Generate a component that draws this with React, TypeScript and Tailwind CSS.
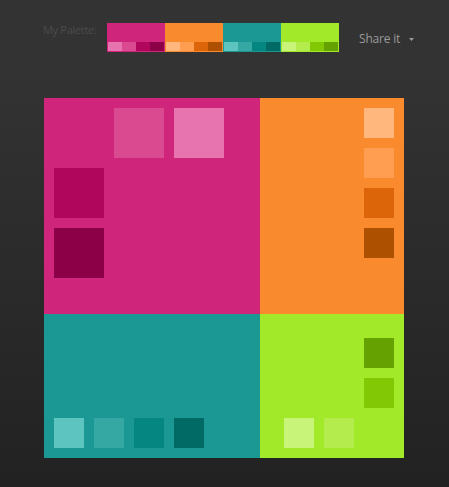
const palette = [
  { main: '#CF267C', shades: ['#E774AE', '#DA4A91', '#B0075C', '#8B0047'] },
  { main: '#F98A2D', shades: ['#FFB77E', '#FF9D50', '#DB6508', '#AD5000'] },
  { main: '#1B9894', shades: ['#5EC4BF', '#35A8A3', '#068680', '#026A64'] },
  { main: '#A2E92A', shades: ['#C8F47A', '#B4EC4E', '#82C805', '#65A100'] },
]

function Swatch({ color, size }: { color: string; size: string }) {
  return <div className={size} style={{ backgroundColor: color }} />
}

function PaletteStrip() {
  return (
    <div className="flex">
      {palette.map((p) => (
        <div key={p.main} className="w-[58px] h-[29px] flex flex-col" style={{ backgroundColor: p.main }}>
          <div className="h-[19px]" />
          <div className="flex px-px">
            {p.shades.map((s) => (
              <div key={s} className="w-[14px] h-[9px]" style={{ backgroundColor: s }} />
            ))}
          </div>
        </div>
      ))}
    </div>
  )
}

export default function App() {
  const [pink, orange, teal, lime] = palette
  return (
    <div className="w-[449px] h-[487px] bg-gradient-to-b from-[#333333] from-15% to-[#222222] font-['Open_Sans','Liberation_Sans',sans-serif]">
      {/* header */}
      <div className="flex pt-[23px] pl-[43px]">
        <span className="text-[11px] leading-none tracking-[-0.3px] whitespace-nowrap text-[#4b4b4b] mt-[1px] w-[64px]">My Palette:</span>
        <PaletteStrip />
        <div className="flex items-center ml-[20px] mt-[9px] h-[14px]">
          <span className="text-[12px] leading-none tracking-[-0.2px] text-[#9a9a9a]">Share it</span>
          <svg className="ml-[9px] mt-[1px]" width="5" height="3" viewBox="0 0 5 3">
            <path d="M0 0h5L2.5 3z" fill="#9a9a9a" />
          </svg>
        </div>
      </div>

      {/* big swatch grid */}
      <div className="ml-[44px] mt-[46px] w-[360px] grid grid-cols-[216px_144px] grid-rows-[216px_144px]">
        {/* pink */}
        <div className="p-[10px] flex flex-col gap-[10px]" style={{ backgroundColor: pink.main }}>
          <div className="flex gap-[10px] pl-[60px]">
            <Swatch color={pink.shades[1]} size="w-[50px] h-[50px]" />
            <Swatch color={pink.shades[0]} size="w-[50px] h-[50px]" />
          </div>
          <Swatch color={pink.shades[2]} size="w-[50px] h-[50px]" />
          <Swatch color={pink.shades[3]} size="w-[50px] h-[50px]" />
        </div>
        {/* orange */}
        <div className="p-[10px] flex flex-col items-end gap-[10px]" style={{ backgroundColor: orange.main }}>
          {orange.shades.map((s) => (
            <Swatch key={s} color={s} size="w-[30px] h-[30px]" />
          ))}
        </div>
        {/* teal */}
        <div className="p-[10px] flex items-end gap-[10px]" style={{ backgroundColor: teal.main }}>
          {teal.shades.map((s) => (
            <Swatch key={s} color={s} size="w-[30px] h-[30px]" />
          ))}
        </div>
        {/* lime */}
        <div className="pt-[24px] pr-[10px] pb-[10px] pl-[24px] flex flex-col gap-[10px]" style={{ backgroundColor: lime.main }}>
          <div className="flex flex-col items-end gap-[10px]">
            <Swatch color={lime.shades[3]} size="w-[30px] h-[30px]" />
            <Swatch color={lime.shades[2]} size="w-[30px] h-[30px]" />
          </div>
          <div className="flex gap-[10px]">
            <Swatch color={lime.shades[0]} size="w-[30px] h-[30px]" />
            <Swatch color={lime.shades[1]} size="w-[30px] h-[30px]" />
          </div>
        </div>
      </div>
    </div>
  )
}
